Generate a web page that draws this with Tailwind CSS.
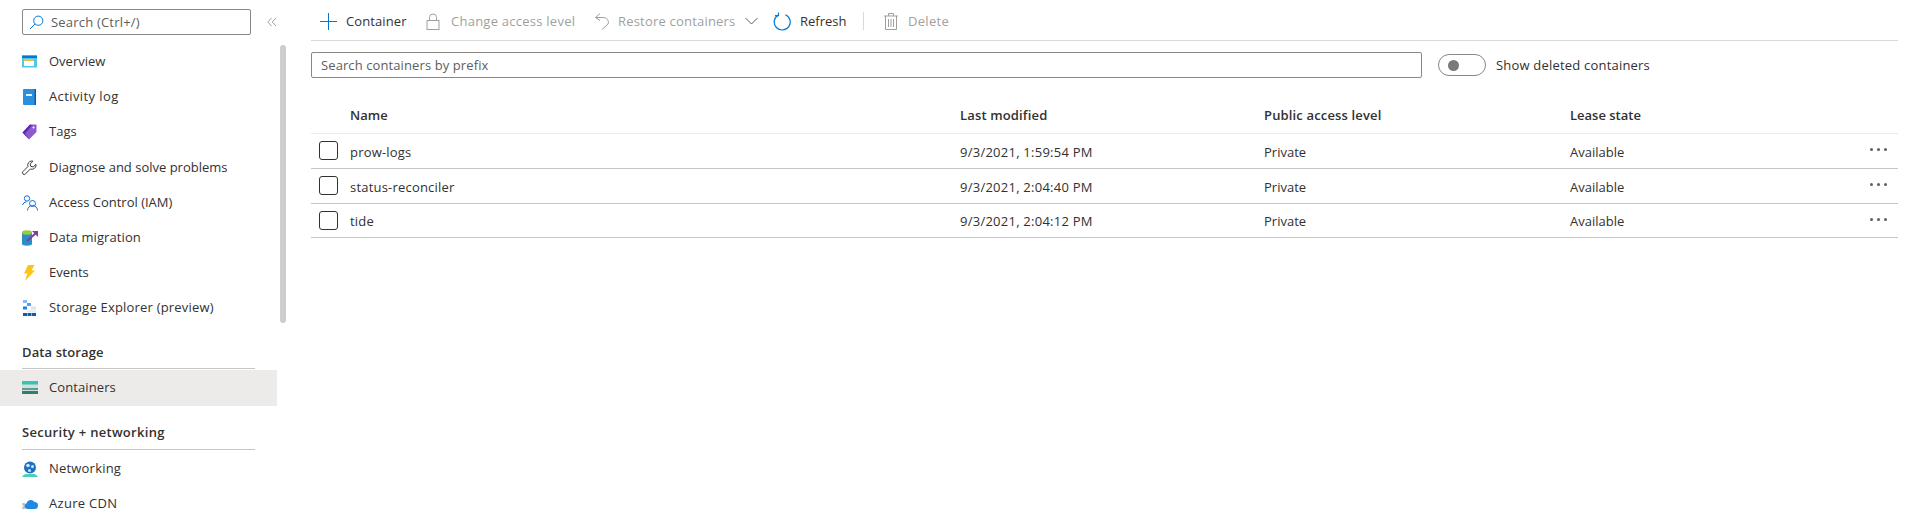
<!DOCTYPE html>
<html lang="en">
<head>
<meta charset="UTF-8">
<title>Containers</title>
<script src="https://cdn.jsdelivr.net/npm/@tailwindcss/browser@4"></script>
</head>
<body class="bg-white overflow-hidden font-['Open_Sans',sans-serif] text-[13px] text-[#323130]">
<div class="flex h-[516px] w-[1920px] overflow-hidden">

  <!-- Sidebar -->
  <aside class="w-[290px] shrink-0 relative">
    <div class="absolute left-[280px] top-[45px] w-[6px] h-[278px] rounded-[3px] bg-[#cdcdcd]"></div>
    <div class="pl-[22px] pt-[9px] flex items-center">
      <div class="w-[229px] h-[26px] border border-[#8a8886] rounded-[2px] flex items-center pl-[6px] gap-[7px]">
        <svg width="15" height="15" viewBox="0 0 15 15" fill="none" stroke="#0078d4" stroke-width="1"><circle cx="9.3" cy="5.7" r="4.6"/><path d="M6 9 1 14"/></svg>
        <span class="text-[#605e5c] translate-y-px tracking-[0.2px]">Search (Ctrl+/)</span>
      </div>
      <svg class="ml-[16px]" width="10" height="10" viewBox="0 0 10 10" fill="none" stroke="#a19f9d" stroke-width="1"><path d="M4.5 1 .8 5l3.700 4M9 1 5.300 5 9 9"/></svg>
    </div>

    <nav class="mt-[9px] w-[277px]">
      <div class="h-[35px] flex items-center pl-[22px] gap-[12px]">
        <svg class="shrink-0" width="15" height="15" viewBox="0 0 15 15"><rect y="1.500" width="15" height="12" fill="#50c7e8"/><rect y="1.500" width="15" height="2.500" fill="#0078d4"/><rect x="2" y="5" width="10" height="7" fill="#fff"/><rect x="2" y="5" width="10" height="2" fill="#f2b84b"/></svg>
        <span>Overview</span>
      </div>
      <div class="h-[35px] flex items-center pl-[22px] gap-[12px]">
        <svg class="shrink-0" width="15" height="16" viewBox="0 0 15 16"><rect x="1" y="0" width="13" height="16" rx="1" fill="#2a8fdc"/><rect x="12.500" y="0" width="1.500" height="16" fill="#0a5ea8"/><rect x="4" y="5" width="6" height="2" fill="#e6f3fc"/></svg>
        <span class="tracking-[0.4px]">Activity log</span>
      </div>
      <div class="h-[36px] flex items-center pl-[22px] gap-[12px]">
        <svg class="shrink-0" width="15" height="16" viewBox="0 0 15 16"><path d="M8 .5h6.500V8L7 15.500.5 8.500z" fill="#8c5bd0"/><path d="M.5 8.500 8 .5l2 1L3 9.500l4 6z" fill="#5e2aa8"/><circle cx="11.500" cy="3.500" r="1" fill="#fff"/></svg>
        <span>Tags</span>
      </div>
      <div class="h-[35px] flex items-center pl-[22px] gap-[12px]">
        <svg class="shrink-0 overflow-visible" width="15" height="17" viewBox="0 0 16 16" fill="none" stroke="#323130" stroke-width="1"><path d="M10.500 1a4.500 4.500 0 0 0-4.200 6L1 12.300a1.800 1.800 0 0 0 2.600 2.600L8.900 9.600A4.500 4.500 0 0 0 15 5.400l-.1-.8-3 2.800-2.600-.7-.6-2.500 3-2.900a4.500 4.500 0 0 0-1.200-.3z"/></svg>
        <span>Diagnose and solve problems</span>
      </div>
      <div class="h-[35px] flex items-center pl-[22px] gap-[11px]">
        <svg class="shrink-0" width="16" height="16" viewBox="0 0 16 16" fill="none" stroke="#0f6fd8" stroke-width="1"><circle cx="5" cy="3.500" r="2.700"/><path d="M.5 10a4.600 4.600 0 0 1 4-3.200"/><circle cx="10.500" cy="8.500" r="3"/><path d="M5.500 15.500a5 5 0 0 1 10 0"/></svg>
        <span>Access Control (IAM)</span>
      </div>
      <div class="h-[35px] flex items-center pl-[22px] gap-[11px]">
        <svg class="shrink-0" width="16" height="16" viewBox="0 0 16 16"><path d="M0 2.500h10v11.500c0 1.200-2.200 1.700-5 1.700S0 15.200 0 14z" fill="#2a8fc4"/><ellipse cx="5" cy="2.500" rx="5" ry="2.200" fill="#9ccb3b"/><path d="m5 11 9-8" stroke="#7b3fa0" stroke-width="2"/><path d="M10 1h6v6z" fill="#7b3fa0"/></svg>
        <span class="tracking-[0.1px]">Data migration</span>
      </div>
      <div class="h-[35px] flex items-center pl-[22px] gap-[12px]">
        <svg class="shrink-0" width="15" height="16" viewBox="0 0 15 16"><path d="M6 0h6.500L9.500 5.500H13L3 16l2.500-7.500H2z" fill="#fcc419"/></svg>
        <span>Events</span>
      </div>
      <div class="h-[35px] flex items-center pl-[22px] gap-[12px]">
        <svg class="shrink-0" width="15" height="16" viewBox="0 0 15 16"><rect x="1" y="0" width="4" height="3" fill="#83b9f9"/><rect x="1" y="3.500" width="4" height="2.500" fill="#fff"/><rect x="5" y="3" width="4" height="3" fill="#5ea0ef"/><rect x="1" y="6.500" width="4" height="3" fill="#1a87d8"/><rect x="9" y="6.500" width="5" height="3" fill="#d8e4f2"/><rect x="5" y="10" width="9" height="2.500" fill="#e8eef6"/><rect x="1" y="13" width="4" height="3" fill="#0f5da8"/><rect x="5.500" y="13" width="4" height="3" fill="#0f5da8"/><rect x="10" y="13" width="4" height="3" fill="#0f5da8"/></svg>
        <span class="tracking-[0.2px]">Storage Explorer (preview)</span>
      </div>
      <div class="mt-[17px] ml-[22px] w-[233px] h-[27px] pt-[1px] font-semibold border-b border-[#c8c6c4] leading-[18px] tracking-[0.1px]">Data storage</div>
      <div class="h-[36px] mt-[1px] flex items-center pl-[22px] gap-[11px] bg-[#edebe9]">
        <svg class="shrink-0" width="16" height="14" viewBox="0 0 16 14"><rect width="16" height="13" fill="#d5dcdc"/><rect width="16" height="3.500" fill="#37c2b1"/><rect y="7" width="16" height="2" fill="#5a9d93"/><rect y="10" width="16" height="3" fill="#2f7d72"/></svg>
        <span class="tracking-[0.1px]">Containers</span>
      </div>
      <div class="mt-[18px] ml-[22px] w-[233px] h-[26px] font-semibold border-b border-[#c8c6c4] leading-[16px] tracking-[0.3px]">Security + networking</div>
      <div class="h-[35px] mt-[1px] flex items-center pl-[22px] gap-[11px]">
        <svg class="shrink-0" width="16" height="16" viewBox="0 0 16 16"><path d="M0 16c1-2 3-3 4-3h8c1 0 3 1 4 3z" fill="#4dd0b0"/><circle cx="8" cy="6.500" r="6" fill="#1d6fc4"/><circle cx="6" cy="4.500" r="1.800" fill="#cfe6fb"/><circle cx="10.500" cy="5.500" r="1.500" fill="#cfe6fb"/><circle cx="7.500" cy="9.500" r="1.500" fill="#cfe6fb"/></svg>
        <span class="tracking-[0.2px]">Networking</span>
      </div>
      <div class="h-[35px] flex items-center pl-[22px] gap-[11px]">
        <svg class="shrink-0" width="16" height="12" viewBox="0 0 16 12"><path d="M5 11a3 3 0 0 1-.5-5.800A4.500 4.500 0 0 1 12.500 4 3.500 3.500 0 0 1 12.500 11z" fill="#1e88e5"/><path d="M0 6h3M1 8h2.500M0 10h3" stroke="#7f8c99" stroke-width="1"/></svg>
        <span class="tracking-[0.3px]">Azure CDN</span>
      </div>
    </nav>
  </aside>

  <!-- Main -->
  <main class="ml-[21px] w-[1587px] shrink-0">
    <div class="h-[41px] pt-[2px] border-b border-[#d9d9d9] flex items-center pl-[9px] gap-[4px]">
      <div class="flex items-center gap-[9px] text-[#323130] w-[99px]">
        <svg width="17" height="17" viewBox="0 0 17 17" stroke="#0078d4" stroke-width="1"><path d="M8.500 0v17M0 8.500h17"/></svg>
        <span class="translate-y-px tracking-[0.1px]">Container</span>
      </div>
      <div class="flex items-center gap-[11px] text-[#a19f9d] ml-[3px] w-[164px]">
        <svg width="14" height="17" viewBox="0 0 14 17" fill="none" stroke="#a19f9d" stroke-width="1"><rect x="1" y="7.500" width="12" height="9"/><path d="M3.500 7.500V4.500a3.500 3.500 0 0 1 7 0v3"/></svg>
        <span class="translate-y-px tracking-[0.25px]">Change access level</span>
      </div>
      <div class="flex items-center text-[#a19f9d] w-[175px]">
        <svg width="16" height="17" viewBox="0 0 16 17" fill="none" stroke="#a19f9d" stroke-width="1"><path d="M6 .5 1.500 4.500 6 7.500M1.500 4.500H9c4 0 6.500 3.500 5 6.500l-6 5.500"/></svg>
        <span class="ml-[8px] translate-y-px tracking-[0.2px]">Restore containers</span>
        <svg class="ml-[9px]" width="13" height="8" viewBox="0 0 13 8" fill="none" stroke="#605e5c" stroke-width="1"><path d="m.5 1 6 6 6-6"/></svg>
      </div>
      <div class="flex items-center gap-[9px] text-[#323130] w-[85px]">
        <svg width="18" height="19" viewBox="0 0 18 19" fill="none" stroke="#0078d4" stroke-width="1.200"><path d="M5 3.200a8 8 0 1 0 7.500-.5"/><path d="M5.500.5v3.200H2"/></svg>
        <span class="translate-y-px">Refresh</span>
      </div>
      <div class="w-px h-[18px] bg-[#d9d9d9] ml-[1px]"></div>
      <div class="flex items-center gap-[10px] text-[#a19f9d] ml-[16px]">
        <svg width="14" height="17" viewBox="0 0 14 17" fill="none" stroke="#a19f9d" stroke-width="1"><path d="M0 3h14M4.500 3V.5h5V3M1.500 3v13.500h11V3M4.500 6v8M7 6v8M9.500 6v8"/></svg>
        <span class="translate-y-px tracking-[0.3px]">Delete</span>
      </div>
    </div>

    <div class="flex items-center mt-[11px]">
      <div class="w-[1111px] h-[26px] border border-[#8a8886] rounded-[2px] flex items-center pl-[9px] text-[#605e5c]"><span class="translate-y-px tracking-[0.1px]">Search containers by prefix</span></div>
      <div class="ml-[16px] w-[48px] h-[22px] border border-[#8a8886] rounded-full flex items-center pl-[9px]">
        <div class="w-[11px] h-[11px] rounded-full bg-[#7a7a7a]"></div>
      </div>
      <span class="ml-[10px] translate-y-px tracking-[0.2px]">Show deleted containers</span>
    </div>

    <table class="mt-[25px] w-[1587px] table-fixed border-collapse">
      <thead>
        <tr class="h-[30px] border-b border-[#edebe9] text-left">
          <th class="w-[39px]"></th>
          <th class="w-[610px] font-semibold align-top pt-[3px] leading-[18px]">Name</th>
          <th class="w-[304px] font-semibold align-top pt-[3px] leading-[18px] tracking-[0.15px]">Last modified</th>
          <th class="w-[306px] font-semibold align-top pt-[3px] leading-[18px] tracking-[0.15px]">Public access level</th>
          <th class="font-semibold align-top pt-[3px] leading-[18px]">Lease state</th>
          <th class="w-[40px]"></th>
        </tr>
      </thead>
      <tbody>
        <tr class="h-[35px] border-b border-[#c8c6c4]">
          <td><div class="ml-[8px] w-[19px] h-[19px] border border-[#323130] rounded-[3px]"></div></td>
          <td class="pt-[4px] tracking-[0.2px]">prow-logs</td><td class="pt-[4px] tracking-[0.25px]">9/3/2021, 1:59:54 PM</td><td class="pt-[4px]">Private</td><td class="pt-[4px]">Available</td>
          <td><div class="ml-[12px] flex gap-[4px] -translate-y-px"><i class="block w-[3px] h-[3px] rounded-full bg-[#605e5c]"></i><i class="block w-[3px] h-[3px] rounded-full bg-[#605e5c]"></i><i class="block w-[3px] h-[3px] rounded-full bg-[#605e5c]"></i></div></td>
        </tr>
        <tr class="h-[35px] border-b border-[#c8c6c4]">
          <td><div class="ml-[8px] w-[19px] h-[19px] border border-[#323130] rounded-[3px]"></div></td>
          <td class="pt-[4px] tracking-[0.2px]">status-reconciler</td><td class="pt-[4px] tracking-[0.25px]">9/3/2021, 2:04:40 PM</td><td class="pt-[4px]">Private</td><td class="pt-[4px]">Available</td>
          <td><div class="ml-[12px] flex gap-[4px] -translate-y-px"><i class="block w-[3px] h-[3px] rounded-full bg-[#605e5c]"></i><i class="block w-[3px] h-[3px] rounded-full bg-[#605e5c]"></i><i class="block w-[3px] h-[3px] rounded-full bg-[#605e5c]"></i></div></td>
        </tr>
        <tr class="h-[34px] border-b border-[#c8c6c4]">
          <td><div class="ml-[8px] w-[19px] h-[19px] border border-[#323130] rounded-[3px]"></div></td>
          <td class="pt-[4px] tracking-[0.2px]">tide</td><td class="pt-[4px] tracking-[0.25px]">9/3/2021, 2:04:12 PM</td><td class="pt-[4px]">Private</td><td class="pt-[4px]">Available</td>
          <td><div class="ml-[12px] flex gap-[4px] -translate-y-px"><i class="block w-[3px] h-[3px] rounded-full bg-[#605e5c]"></i><i class="block w-[3px] h-[3px] rounded-full bg-[#605e5c]"></i><i class="block w-[3px] h-[3px] rounded-full bg-[#605e5c]"></i></div></td>
        </tr>
      </tbody>
    </table>
  </main>
</div>
</body>
</html>
